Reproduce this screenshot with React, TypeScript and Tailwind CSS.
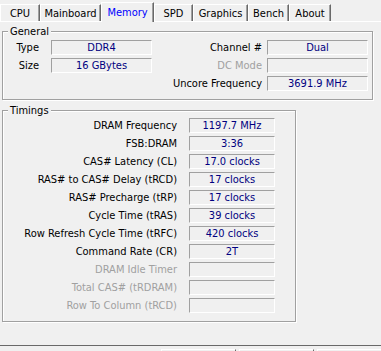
import React from "react";

type Tab = { name: string; w: string; selected?: boolean };

const tabs: Tab[] = [
  { name: "CPU", w: "w-[40px]" },
  { name: "Mainboard", w: "w-[61px]" },
  { name: "Memory", w: "w-[53px]", selected: true },
  { name: "SPD", w: "w-[39px]" },
  { name: "Graphics", w: "w-[55px]" },
  { name: "Bench", w: "w-[41px]" },
  { name: "About", w: "w-[42px]" },
];

function ValueBox({ value, w }: { value: string; w: string }) {
  return (
    <div
      className={`${w} h-[15px] shrink-0 border border-t-[#a0a0a0] border-l-[#a0a0a0] border-b-white border-r-white flex items-center justify-center text-[#000080] whitespace-nowrap`}
    >
      {value}
    </div>
  );
}

function GroupBox({
  title,
  className,
  children,
}: {
  title: string;
  className: string;
  children: React.ReactNode;
}) {
  return (
    <div
      className={`relative border border-[#a0a0a0] shadow-[inset_1px_1px_0_#ffffff,1px_1px_0_#ffffff] ${className}`}
    >
      <div className="absolute left-[5px] top-[-7px] px-[2px] bg-[#f0f0f0] leading-[13px] text-black">
        {title}
      </div>
      {children}
    </div>
  );
}

const general = [
  { l: "Type", v: "DDR4", rl: "Channel #", rv: "Dual", rdis: false },
  { l: "Size", v: "16 GBytes", rl: "DC Mode", rv: "", rdis: true },
  { l: "", v: null as string | null, rl: "Uncore Frequency", rv: "3691.9 MHz", rdis: false },
];

const timings: { l: string; v: string; dis?: boolean }[] = [
  { l: "DRAM Frequency", v: "1197.7 MHz" },
  { l: "FSB:DRAM", v: "3:36" },
  { l: "CAS# Latency (CL)", v: "17.0 clocks" },
  { l: "RAS# to CAS# Delay (tRCD)", v: "17 clocks" },
  { l: "RAS# Precharge (tRP)", v: "17 clocks" },
  { l: "Cycle Time (tRAS)", v: "39 clocks" },
  { l: "Row Refresh Cycle Time (tRFC)", v: "420 clocks" },
  { l: "Command Rate (CR)", v: "2T" },
  { l: "DRAM Idle Timer", v: "", dis: true },
  { l: "Total CAS# (tRDRAM)", v: "", dis: true },
  { l: "Row To Column (tRCD)", v: "", dis: true },
];

export default function App() {
  return (
    <div className="w-[381px] h-[351px] bg-[#f0f0f0] overflow-hidden flex flex-col font-['DejaVu_Sans_Condensed','DejaVu_Sans',sans-serif] [font-stretch:condensed] text-[11px] leading-[13px] text-black select-none">
      {/* Tab strip */}
      <div className="h-[21px] flex items-end shrink-0">
        {tabs.map((t) =>
          t.selected ? (
            <div
              key={t.name}
              className={`${t.w} h-[20px] -mb-[1px] relative z-10 bg-[#f0f0f0] border-t border-l border-r border-t-white border-l-white border-r-[#696969] shadow-[inset_-1px_0_0_#a0a0a0] flex items-start justify-center pt-[3px] text-[#0000ff] shrink-0`}
            >
              {t.name}
            </div>
          ) : (
            <div
              key={t.name}
              className={`${t.w} h-[17px] bg-[#f0f0f0] border-t border-l border-r border-t-white border-l-white border-r-[#696969] shadow-[inset_-1px_0_0_#a0a0a0] flex items-start justify-center pt-[2px] shrink-0`}
            >
              {t.name}
            </div>
          )
        )}
      </div>

      {/* Tab panel */}
      <div className="h-[325px] shrink-0 border-t border-b border-t-white border-b-[#696969] flex flex-col pl-[2px]">
        <GroupBox title="General" className="mt-[9px] w-[371px] h-[69px] pt-[8px] pr-[4px] flex flex-col gap-[3px]">
          {general.map((r, i) => (
            <div key={i} className="flex items-center h-[15px]">
              <div className="w-[36px] text-right whitespace-nowrap">{r.l}</div>
              <div className="ml-[12px] w-[101px] h-[15px]">
                {r.v !== null && <ValueBox value={r.v} w="w-[101px]" />}
              </div>
              <div
                className={`flex-1 text-right whitespace-nowrap ${r.rdis ? "text-[#a0a0a0]" : "text-black"}`}
              >
                {r.rl}
              </div>
              <div className="ml-[5px]">
                <ValueBox value={r.rv} w="w-[101px]" />
              </div>
            </div>
          ))}
        </GroupBox>

        <GroupBox title="Timings" className="mt-[10px] w-[294px] h-[212px] pt-[7px] flex flex-col gap-[3px]">
          {timings.map((r) => (
            <div key={r.l} className="flex items-center h-[15px]">
              <div
                className={`w-[174px] text-right whitespace-nowrap ${r.dis ? "text-[#a0a0a0]" : "text-black"}`}
              >
                {r.l}
              </div>
              <div className="ml-[12px]">
                <ValueBox value={r.v} w="w-[86px]" />
              </div>
            </div>
          ))}
        </GroupBox>
      </div>

      {/* Bottom bar (cut off) */}
      <div className="flex-1 flex items-start pt-[3px] pl-[161px] gap-[3px]">
        <div className="w-[75px] h-[10px] border-t border-l border-r border-t-white border-l-white border-r-[#696969] shrink-0" />
        <div className="w-[75px] h-[10px] border-t border-l border-r border-t-white border-l-white border-r-[#696969] shrink-0" />
        <div className="flex-1 h-[10px] border-t border-l border-t-white border-l-white" />
      </div>
    </div>
  );
}
